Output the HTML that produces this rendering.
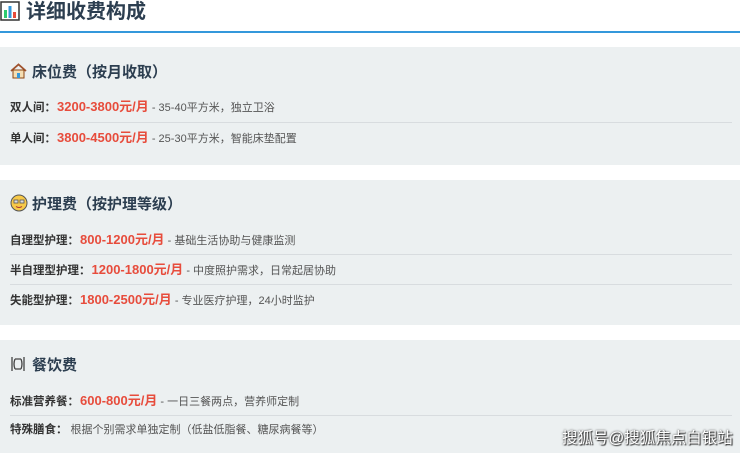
<!DOCTYPE html>
<html><head><meta charset="utf-8"><style>
body{margin:0;width:740px;height:453px;overflow:hidden;background:#fff;font-family:"Liberation Sans","Noto Sans CJK SC",sans-serif;position:relative}
.h{position:absolute;left:0;top:0;height:24px;font-size:20px;font-weight:bold;color:#2c3e50;line-height:24px}
.line{position:absolute;left:0;top:31px;width:740px;height:2px;background:#3498db}
.card{position:absolute;left:0;width:740px;background:#ecf0f1}
.t{position:absolute;left:10px;font-size:15px;font-weight:bold;color:#2c3e50;line-height:20px;white-space:nowrap}
.r{position:absolute;left:10px;right:10px;font-size:11px;color:#555;line-height:16px;white-space:nowrap}
.r b{color:#333;font-size:11.5px}
.r span{color:#e74c3c;font-weight:bold;font-size:13px;margin-left:1px}
.sep{position:absolute;left:10px;right:8px;height:1px;background:#d8dcdf}
.wm{position:absolute;left:562px;top:426px;font-size:15.5px;color:#fff;text-shadow:0 0 2px #333,1px 1px 1px #333;white-space:nowrap}
</style></head><body>
<div class="h"><svg width="20" height="20" viewBox="0 0 20 20" style="vertical-align:-3px;margin-right:6px"><rect x="1" y="1" width="18" height="18" fill="#fff" stroke="#333" stroke-width="1.5"/><rect x="4" y="9" width="3" height="8" fill="#2ecc71"/><rect x="8.5" y="5" width="3" height="12" fill="#3498db"/><rect x="13" y="11" width="3" height="6" fill="#e74c3c"/></svg>详细收费构成</div>
<div class="line"></div>

<div class="card" style="top:47px;height:118px">
<div class="t" style="top:16px"><svg width="17" height="16" viewBox="0 0 17 16" style="vertical-align:-2px;margin-right:5px"><path d="M1 8L8.5 1.5L16 8" fill="none" stroke="#a0522d" stroke-width="1.8"/><rect x="3" y="7" width="11" height="8" fill="#f5deb3" stroke="#8b4513"/><rect x="7" y="10" width="3" height="5" fill="#3498db"/></svg>床位费（按月收取）</div>
<div class="r" style="top:52px"><b>双人间：</b><span>3200-3800元/月</span> - 35-40平方米，独立卫浴</div>
<div class="sep" style="top:75px"></div>
<div class="r" style="top:83px"><b>单人间：</b><span>3800-4500元/月</span> - 25-30平方米，智能床垫配置</div>
</div>

<div class="card" style="top:180px;height:145px">
<div class="t" style="top:14px"><svg width="18" height="18" viewBox="0 0 18 18" style="vertical-align:-3px;margin-right:4px"><circle cx="9" cy="9" r="8" fill="#f7c948" stroke="#555"/><rect x="4" y="6" width="4" height="3" fill="#ddd" stroke="#555" stroke-width=".8"/><rect x="10" y="6" width="4" height="3" fill="#ddd" stroke="#555" stroke-width=".8"/><path d="M6 12.5Q9 14.5 12 12.5" stroke="#a33" fill="none"/></svg>护理费（按护理等级）</div>
<div class="r" style="top:52px"><b>自理型护理：</b><span>800-1200元/月</span> - 基础生活协助与健康监测</div>
<div class="sep" style="top:74px"></div>
<div class="r" style="top:82px"><b>半自理型护理：</b><span>1200-1800元/月</span> - 中度照护需求，日常起居协助</div>
<div class="sep" style="top:104px"></div>
<div class="r" style="top:112px"><b>失能型护理：</b><span>1800-2500元/月</span> - 专业医疗护理，24小时监护</div>
</div>

<div class="card" style="top:340px;height:113px">
<div class="t" style="top:15px"><svg width="16" height="18" viewBox="0 0 16 18" style="vertical-align:-3px;margin-right:6px"><path d="M2 2V16M14 2V16M5 4Q3 9 5 14M11 4Q13 9 11 14M5 4H11M5 14H11" fill="none" stroke="#444" stroke-width="1.3"/></svg>餐饮费</div>
<div class="r" style="top:53px"><b>标准营养餐：</b><span>600-800元/月</span> - 一日三餐两点，营养师定制</div>
<div class="sep" style="top:75px"></div>
<div class="r" style="top:82px"><b>特殊膳食：</b> 根据个别需求单独定制（低盐低脂餐、糖尿病餐等）</div>
</div>
<div class="wm">搜狐号@搜狐焦点白银站</div>
</body></html>
